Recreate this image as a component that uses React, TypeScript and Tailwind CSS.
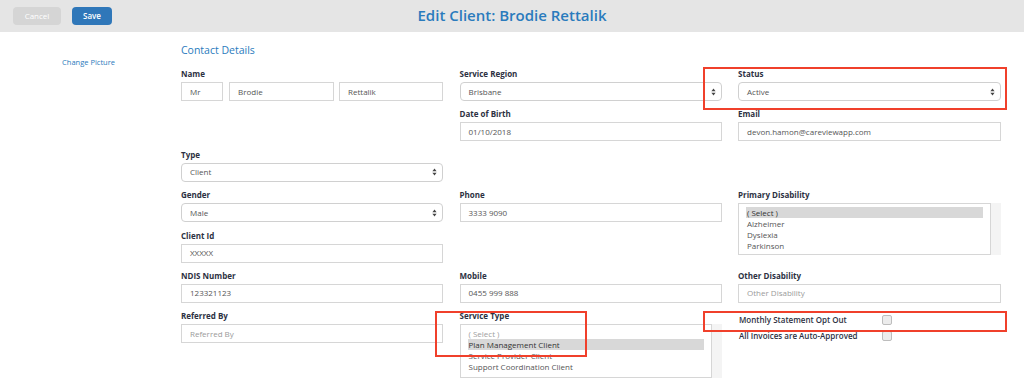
import React from 'react';

const font = { fontFamily: '"Open Sans", "Liberation Sans", sans-serif' };

const Label = ({ children }: { children: React.ReactNode }) => (
  <div className="h-[14px] text-[8px] font-bold leading-[12px] text-[#2d3142]">{children}</div>
);

const TextBox = ({ value, placeholder, className = '' }: { value?: string; placeholder?: string; className?: string }) => (
  <div
    className={`flex h-[19px] items-center border border-[#d6d6d6] bg-white px-[8px] text-[8px] ${
      value ? 'text-[#555]' : 'text-[#9a9a9a]'
    } ${className}`}
  >
    {value || placeholder}
  </div>
);

const Arrows = () => (
  <svg width="5" height="8" viewBox="0 0 5 8" className="shrink-0">
    <path d="M2.5 0.5 L4.6 3.2 L0.4 3.2 Z" fill="#444" />
    <path d="M2.5 7.5 L4.6 4.8 L0.4 4.8 Z" fill="#444" />
  </svg>
);

const SelectBox = ({ value }: { value: string }) => (
  <div className="flex h-[19px] items-center justify-between rounded-[4px] border border-[#d0d0d0] bg-white pl-[8px] pr-[5px] text-[8px] text-[#555]">
    <span>{value}</span>
    <Arrows />
  </div>
);

const ListBox = ({ options, selected, height }: { options: string[]; selected: number; height: string }) => (
  <div className={`flex ${height}`}>
    <div className="flex-1 border border-[#d6d6d6] bg-white px-[7px] pt-[3px]">
      {options.map((o, i) => (
        <div
          key={o}
          className={`h-[11px] px-[1px] text-[8px] leading-[11px] ${
            i === selected ? 'bg-[#d8d8d8] text-[#333]' : i === 0 ? 'text-[#a0a0a0]' : 'text-[#555]'
          }`}
        >
          {o}
        </div>
      ))}
    </div>
    <div className="w-[10px] bg-[#f4f4f4]" />
  </div>
);

const Field = ({ label, children, className = '' }: { label: string; children: React.ReactNode; className?: string }) => (
  <div className={className}>
    <Label>{label}</Label>
    {children}
  </div>
);

const App = () => {
  return (
    <div className="relative h-[381px] w-[1024px] overflow-hidden bg-white" style={font}>
      {/* Top bar */}
      <div className="relative flex h-[32px] items-center bg-[#e5e5e5] px-[13px]">
        <button className="flex h-[18px] w-[48px] items-center justify-center rounded-[4px] bg-[#d5d5d5] text-[8px] text-white">
          Cancel
        </button>
        <button className="ml-[11px] flex h-[18px] w-[40px] items-center justify-center rounded-[4px] bg-[#2f77b9] text-[8px] font-semibold text-white">
          Save
        </button>
        <div className="absolute inset-x-0 top-[5px] text-center text-[15px] font-semibold leading-[20px] text-[#2a7bbd]">
          Edit Client: Brodie Rettalik
        </div>
      </div>

      <div className="flex">
        {/* Sidebar */}
        <div className="w-[181px] pr-[4px] pt-[25px] text-center text-[7.5px] leading-[10px] text-[#2a7bbd]">
          Change Picture
        </div>

        {/* Form */}
        <div className="pt-[11px]">
          <div className="mb-[10px] text-[10.5px] leading-[15px] text-[#2a7bbd]">Contact Details</div>
          <div className="grid grid-cols-[262px_262px_263px] auto-rows-[40.4px] gap-x-[16.5px]">
            <Field label="Name">
              <div className="flex">
                <TextBox value="Mr" className="w-[42px]" />
                <TextBox value="Brodie" className="ml-[6px] w-[105px]" />
                <TextBox value="Rettalik" className="ml-[5px] flex-1" />
              </div>
            </Field>
            <Field label="Service Region">
              <SelectBox value="Brisbane" />
            </Field>
            <Field label="Status">
              <SelectBox value="Active" />
            </Field>

            <div />
            <Field label="Date of Birth">
              <TextBox value="01/10/2018" />
            </Field>
            <Field label="Email">
              <TextBox value="devon.hamon@careviewapp.com" />
            </Field>

            <Field label="Type">
              <SelectBox value="Client" />
            </Field>
            <div />
            <div />

            <Field label="Gender">
              <SelectBox value="Male" />
            </Field>
            <Field label="Phone">
              <TextBox value="3333 9090" />
            </Field>
            <Field label="Primary Disability" className="row-span-2">
              <ListBox
                options={['( Select )', 'Alzheimer', 'Dyslexia', 'Parkinson']}
                selected={0}
                height="h-[52px]"
              />
            </Field>

            <Field label="Client Id">
              <TextBox value="XXXXX" />
            </Field>
            <div />

            <Field label="NDIS Number">
              <TextBox value="123321123" />
            </Field>
            <Field label="Mobile">
              <TextBox value="0455 999 888" />
            </Field>
            <Field label="Other Disability">
              <TextBox placeholder="Other Disability" />
            </Field>

            <Field label="Referred By">
              <TextBox placeholder="Referred By" />
            </Field>
            <Field label="Service Type">
              <ListBox
                options={['( Select )', 'Plan Management Client', 'Service Provider Client', 'Support Coordination Client']}
                selected={1}
                height="h-[54px]"
              />
            </Field>
            <div className="pt-[5px]">
              <div className="flex h-[15px] items-start">
                <div className="w-[144px] pl-[1px] text-[8px] font-semibold leading-[10px] text-[#2d3142]">
                  Monthly Statement Opt Out
                </div>
                <div className="h-[10px] w-[10px] rounded-[2px] border border-[#bdbdbd] bg-[#ececec]" />
              </div>
              <div className="flex h-[15px] items-start pt-[1px]">
                <div className="w-[144px] pl-[1px] text-[8px] font-semibold leading-[10px] text-[#2d3142]">
                  All Invoices are Auto-Approved
                </div>
                <div className="h-[10px] w-[10px] rounded-[2px] border border-[#bdbdbd] bg-[#ececec]" />
              </div>
            </div>
          </div>
        </div>
      </div>

      {/* Annotation boxes */}
      <div className="pointer-events-none absolute left-[703px] top-[67px] h-[43px] w-[304px] border-2 border-[#f0402b]" />
      <div className="pointer-events-none absolute left-[435px] top-[311px] h-[46px] w-[152px] border-2 border-[#f0402b]" />
      <div className="pointer-events-none absolute left-[703px] top-[311px] h-[21px] w-[304px] border-2 border-[#f0402b]" />
    </div>
  );
};

export default App;
